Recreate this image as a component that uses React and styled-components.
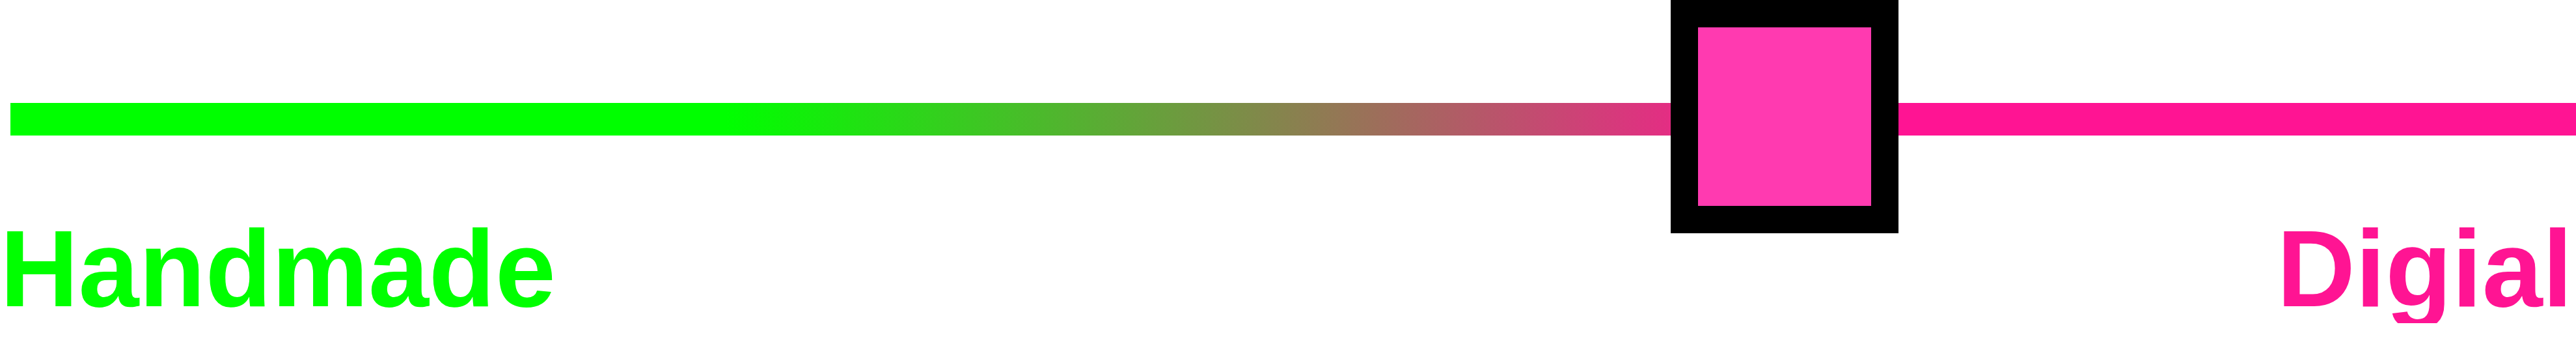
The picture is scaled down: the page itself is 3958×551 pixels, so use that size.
import styled, { createGlobalStyle } from "styled-components";

const GlobalStyle = createGlobalStyle`
  html, body {
    margin: 0;
    padding: 0;
    background: #ffffff;
  }
  body {
    font-family: "Liberation Sans", Arial, sans-serif;
  }
`;

const Page = styled.div`
  width: 3958px;
`;

const SliderArea = styled.div`
  position: relative;
  height: 329px;
  padding: 158px 0 0 16px;
  box-sizing: border-box;
`;

const Track = styled.div`
  height: 50px;
  background: linear-gradient(
    to right,
    #00ff00 0,
    #00ff00 ${({ $from }) => $from}px,
    #ff1493 ${({ $to }) => $to}px,
    #ff1493 100%
  );
`;

const Thumb = styled.div`
  position: absolute;
  top: 0;
  left: ${({ $left }) => $left}px;
  width: 350px;
  height: 358px;
  box-sizing: border-box;
  border: 42px solid #000000;
  background: #ff3ab0;
`;

const Labels = styled.div`
  display: flex;
  justify-content: space-between;
  padding-right: 5px;
`;

const Label = styled.span`
  font-size: 167px;
  font-weight: bold;
  line-height: 1;
  color: ${({ $color }) => $color};
`;

const App = () => {
  const thumbLeft = 2567;

  return (
    <Page>
      <GlobalStyle />
      <SliderArea>
        <Track $from={1100} $to={2726} />
        <Thumb $left={thumbLeft} />
      </SliderArea>
      <Labels>
        <Label $color="#00ff00">Handmade</Label>
        <Label $color="#ff1493">Digial</Label>
      </Labels>
    </Page>
  );
};

export default App;
